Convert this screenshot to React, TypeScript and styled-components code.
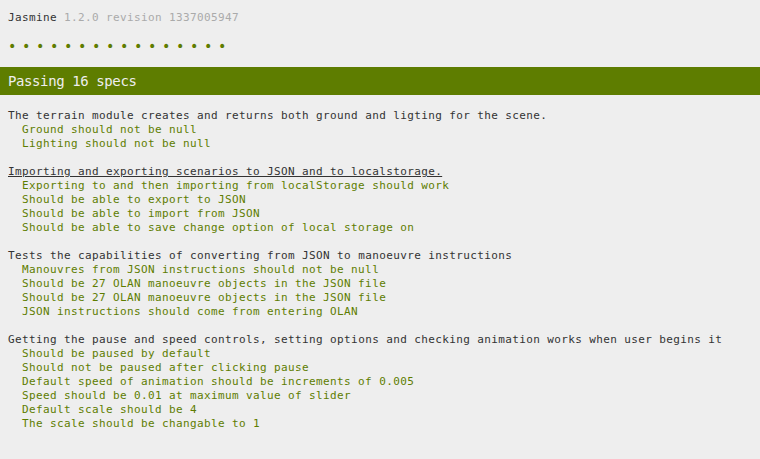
import React from "react";
import styled, { createGlobalStyle } from "styled-components";

const Global = createGlobalStyle`
  html, body { margin: 0; padding: 0; background: #eeeeee; }
  body { overflow: hidden; }
`;

const Reporter = styled.div`
  font-family: "DejaVu Sans Mono", "Liberation Mono", monospace;
  font-size: 11px;
  line-height: 14px;
  letter-spacing: 0.38px;
  color: #333333;
  padding-top: 11px;
  display: flex;
  flex-direction: column;
`;

const Banner = styled.div`
  padding: 0 8px;
  height: 14px;
  white-space: nowrap;
`;

const Version = styled.span`
  color: #aaaaaa;
`;

const SymbolSummary = styled.ul`
  list-style: none;
  margin: 14px 0;
  padding: 0 8px;
  display: flex;
  flex-wrap: wrap;
`;

const Symbol = styled.li`
  width: 14px;
  height: 7px;
  margin-bottom: 7px;
  font-size: 14px;
  letter-spacing: 0;
  &::before {
    content: "\\2022";
    color: #5e7d00;
  }
`;

const Bar = styled.div`
  background: #5e7d00;
  color: #eeeeee;
  font-size: 14px;
  line-height: 28px;
  letter-spacing: -0.4px;
  padding: 0 8px;
`;

const Results = styled.div`
  padding: 14px 8px 0;
  display: flex;
  flex-direction: column;
  gap: 14px;
`;

const Suite = styled.div`
  display: flex;
  flex-direction: column;
`;

const SuiteTitle = styled.a<{ $hover?: boolean }>`
  color: #333333;
  text-decoration: ${(p) => (p.$hover ? "underline" : "none")};
  white-space: nowrap;
  align-self: flex-start;
`;

const Spec = styled.a`
  color: #5e7d00;
  margin-left: 14px;
  white-space: nowrap;
  text-decoration: none;
`;

const suites: { title: string; hover?: boolean; specs: string[] }[] = [
  {
    title: "The terrain module creates and returns both ground and ligting for the scene.",
    specs: ["Ground should not be null", "Lighting should not be null"],
  },
  {
    title: "Importing and exporting scenarios to JSON and to localstorage.",
    hover: true,
    specs: [
      "Exporting to and then importing from localStorage should work",
      "Should be able to export to JSON",
      "Should be able to import from JSON",
      "Should be able to save change option of local storage on",
    ],
  },
  {
    title: "Tests the capabilities of converting from JSON to manoeuvre instructions",
    specs: [
      "Manouvres from JSON instructions should not be null",
      "Should be 27 OLAN manoeuvre objects in the JSON file",
      "Should be 27 OLAN manoeuvre objects in the JSON file",
      "JSON instructions should come from entering OLAN",
    ],
  },
  {
    title:
      "Getting the pause and speed controls, setting options and checking animation works when user begins it",
    specs: [
      "Should be paused by default",
      "Should not be paused after clicking pause",
      "Default speed of animation should be increments of 0.005",
      "Speed should be 0.01 at maximum value of slider",
      "Default scale should be 4",
      "The scale should be changable to 1",
    ],
  },
];

export default function App() {
  return (
    <>
      <Global />
      <Reporter>
        <Banner>
          Jasmine <Version>1.2.0 revision 1337005947</Version>
        </Banner>
        <SymbolSummary>
          {Array.from({ length: 16 }).map((_, i) => (
            <Symbol key={i} />
          ))}
        </SymbolSummary>
        <Bar>Passing 16 specs</Bar>
        <Results>
          {suites.map((s, i) => (
            <Suite key={i}>
              <SuiteTitle $hover={s.hover}>{s.title}</SuiteTitle>
              {s.specs.map((sp, j) => (
                <Spec key={j}>{sp}</Spec>
              ))}
            </Suite>
          ))}
        </Results>
      </Reporter>
    </>
  );
}
